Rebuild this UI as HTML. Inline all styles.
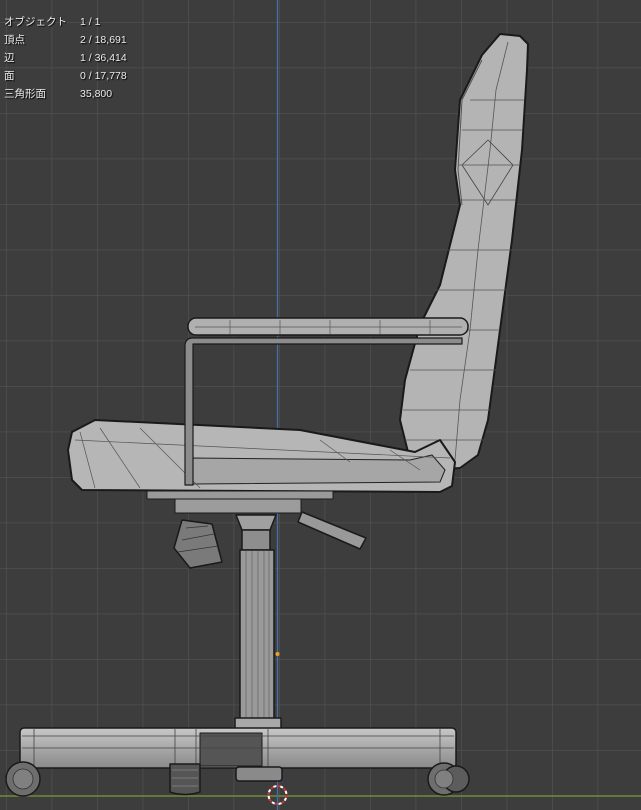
<!DOCTYPE html>
<html><head><meta charset="utf-8"><style>
html,body{margin:0;padding:0;background:#3d3d3d;width:641px;height:810px;overflow:hidden}
.ov{position:absolute;left:4px;top:13px;width:200px;font:10.5px "Liberation Sans","Noto Sans CJK JP",sans-serif;color:#ececec;line-height:18px;text-shadow:1px 1px 1px #000;white-space:nowrap}
.ov div{position:relative;height:18px}
.ov div span{position:absolute;left:76px;top:0;white-space:nowrap}
</style></head><body>
<svg width="641" height="810" style="position:absolute;left:0;top:0">
<defs>
<pattern id="g" width="45.5" height="45.5" patternUnits="userSpaceOnUse" x="6" y="22">
<path d="M0 0H45.5M0 0V45.5" stroke="#505050" stroke-width="1.5" fill="none"/>
</pattern>
<linearGradient id="bar" x1="0" y1="0" x2="0" y2="1"><stop offset="0" stop-color="#c8c8c8"/><stop offset="0.5" stop-color="#a8a8a8"/><stop offset="1" stop-color="#8a8a8a"/></linearGradient>
</defs>
<rect width="641" height="810" fill="url(#g)"/>
<line x1="0" y1="796" x2="641" y2="796" stroke="#7a9a3a" stroke-width="1.3"/>
<line x1="277.5" y1="0" x2="277.5" y2="810" stroke="#4a6fa8" stroke-width="1.3"/>
<g stroke="#1a1a1a" stroke-width="1.5" stroke-linejoin="round">
<path d="M500 34 L520 36 L528 44 L527 70 L522 150 L512 240 L500 330 L488 420 L478 455 L460 468 L430 470 L408 452 L400 420 L405 380 L420 325 L440 285 L460 205 L455 170 L460 100 L482 55 Z" fill="#b4b4b4" stroke-width="2"/>
<path d="M482 60 L462 100 L458 170 L462 205" fill="none" stroke="#555" stroke-width="1"/>
<path d="M508 42 L496 90 L490 150 L478 250 L470 330 L460 400 L455 460" fill="none" stroke="#555" stroke-width="0.8"/>
<path d="M488 140 L513 165 L488 205 L462 165 Z" fill="none" stroke="#444" stroke-width="0.8"/>
<g stroke="#555" stroke-width="0.7"><path d="M470 100 H524M462 130 H522M458 165 H520M460 200 H516M448 250 H512M435 290 H506M420 330 H500M410 370 H496M403 410 H490M405 440 H484"/></g>
<path d="M72 432 L95 420 L300 430 L415 452 L440 440 L455 462 L452 486 L440 492 L82 490 L72 480 L68 450 Z" fill="#b6b6b6" stroke-width="2"/>
<path d="M192 458 L410 460 L432 455 L445 470 L440 482 L192 484 Z" fill="#a6a6a6" stroke="#222" stroke-width="1"/>
<g stroke="#555" stroke-width="0.7" fill="none"><path d="M80 432 L95 488M100 428 L140 488M140 428 L200 488M75 440 L450 458M320 440 L350 462M390 450 L420 470"/></g>
<rect x="188" y="318" width="280" height="17" rx="8" fill="#b0b0b0"/>
<g stroke="#555" stroke-width="0.7"><path d="M230 320V334M280 320V334M330 320V334M380 320V334M430 320V334M195 327H462"/></g>
<path d="M185 485 V346 Q185 338 193 338 H462 V344 H193 V485 Z" fill="#8c8c8c" stroke-width="1.2"/>
<rect x="147" y="491" width="186" height="8" fill="#9a9a9a" stroke-width="1"/>
<rect x="175" y="499" width="126" height="14" fill="#9c9c9c" stroke-width="1"/>
<path d="M302 512 L366 538 L360 549 L298 522 Z" fill="#999"/>
<path d="M182 520 L212 524 L222 562 L190 568 L174 548 Z" fill="#7a7a7a"/>
<g stroke="#333" stroke-width="0.8"><path d="M182 540 L214 534M178 552 L218 546M186 528 L208 526"/></g>
<path d="M236 515 L276 515 L270 530 L242 530 Z" fill="#a0a0a0"/>
<rect x="242" y="530" width="28" height="20" fill="#8e8e8e"/>
<rect x="240" y="550" width="34" height="170" fill="#9a9a9a"/>
<g stroke="#6a6a6a" stroke-width="0.8"><path d="M246 551V719M252 551V719M258 551V719M264 551V719M269 551V719"/></g>
<rect x="235" y="718" width="46" height="14" fill="#a8a8a8"/>
<rect x="20" y="728" width="436" height="40" rx="4" fill="url(#bar)"/>
<rect x="200" y="733" width="62" height="33" fill="#555" stroke-width="1"/>
<g stroke="#444" stroke-width="0.8" fill="none"><path d="M34 729V767M175 729V767M196 729V767M268 729V767M440 729V767M22 736H454M22 748H454"/></g>
<rect x="236" y="767" width="46" height="14" rx="3" fill="#8a8a8a"/>
<circle cx="23" cy="779" r="17" fill="#6e6e6e"/>
<circle cx="23" cy="779" r="10" fill="#808080" stroke="#333" stroke-width="0.8"/>
<path d="M170 764 H200 V792 Q185 797 170 792 Z" fill="#555"/>
<g stroke="#888" stroke-width="0.8"><path d="M172 770H198M172 778H198M172 786H198"/></g>
<circle cx="444" cy="779" r="16" fill="#6e6e6e"/>
<circle cx="456" cy="779" r="13" fill="#5c5c5c"/>
<circle cx="444" cy="779" r="9" fill="#808080" stroke="#333" stroke-width="0.8"/>
</g>
<circle cx="277.5" cy="795" r="9" fill="none" stroke="#c33" stroke-width="2" stroke-dasharray="4 3"/>
<circle cx="277.5" cy="795" r="9" fill="none" stroke="#fff" stroke-width="2" stroke-dasharray="3 4" stroke-dashoffset="4"/>
<circle cx="277.5" cy="654" r="2" fill="#f0a020"/>
</svg>
<div class="ov">
<div>オブジェクト<span>1 / 1</span></div>
<div>頂点<span>2 / 18,691</span></div>
<div>辺<span>1 / 36,414</span></div>
<div>面<span>0 / 17,778</span></div>
<div>三角形面<span>35,800</span></div>
</div>
</body></html>
